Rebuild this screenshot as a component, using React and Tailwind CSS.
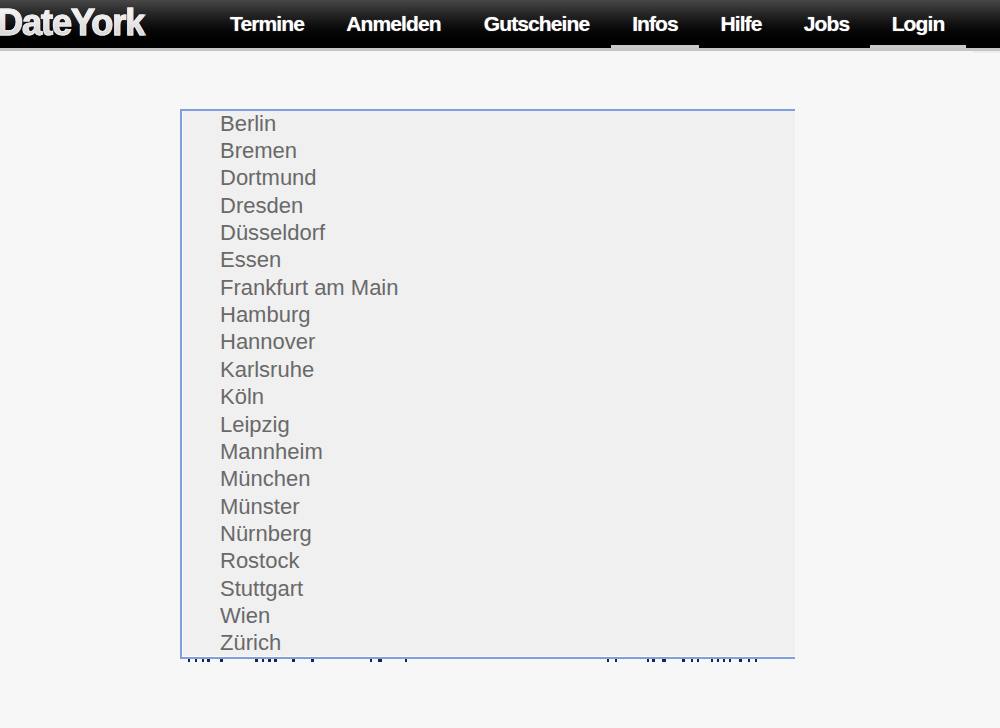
const navItems = [
  { label: 'Termine', width: 'w-[116px]' },
  { label: 'Anmelden', width: 'w-[137px]' },
  { label: 'Gutscheine', width: 'w-[149px]' },
  { label: 'Infos', width: 'w-[88px]', active: true },
  { label: 'Hilfe', width: 'w-[84px]' },
  { label: 'Jobs', width: 'w-[87px]' },
  { label: 'Login', width: 'w-[96px]', active: true },
];

const cities = [
  'Berlin', 'Bremen', 'Dortmund', 'Dresden', 'Düsseldorf', 'Essen', 'Frankfurt am Main',
  'Hamburg', 'Hannover', 'Karlsruhe', 'Köln', 'Leipzig', 'Mannheim', 'München', 'Münster',
  'Nürnberg', 'Rostock', 'Stuttgart', 'Wien', 'Zürich',
];

// tips of the unreadable line cut off under the list: [x, width] from the box's left edge
const cutOffMarks = [
  [8, 2], [15, 2], [22, 2], [27, 3], [40, 3], [75, 3], [82, 2], [88, 3], [94, 3], [112, 3],
  [131, 3], [190, 2], [198, 4], [225, 2], [427, 2], [435, 2], [467, 2], [472, 3], [482, 4],
  [502, 3], [511, 2], [517, 2], [531, 2], [537, 2], [543, 2], [549, 2], [559, 3], [568, 2], [575, 2],
];

const App = () => {
  return (
    <div className="relative h-[728px] overflow-hidden bg-[#f7f7f7] font-['Liberation_Sans',Arial,sans-serif]">
      <header className="flex h-[51px] border-b-[3px] border-[#c4c4c4] bg-gradient-to-b from-[#474747] via-[#111111] via-50% to-black">
        <div className="ml-[-3px] h-[48px] w-[175px] pt-[4px]">
          <span className="bg-gradient-to-b from-white to-[#cccccc] bg-clip-text text-[36px] leading-[38px] font-bold tracking-[-1px] text-transparent [-webkit-text-stroke:1px_#ececec]">
            DateYork
          </span>
        </div>
        <nav className="ml-[37px] flex">
          {navItems.map((item) => (
            <a
              key={item.label}
              className={`flex h-[48px] items-start justify-center pt-[11px] text-[21px] leading-[25px] font-bold tracking-[-0.9px] text-white [text-shadow:0_0_1px_rgba(255,255,255,0.6)] ${item.width} ${item.active ? 'border-b-[3px] border-[#c9c9c9]' : ''}`}
            >
              {item.label}
            </a>
          ))}
        </nav>
      </header>
      <div className="absolute top-[51px] right-0 h-[2px] w-[27px] bg-[#ededed]" />

      <main className="ml-[180px] mt-[58px] w-[615px]">
        <ul className="h-[550px] overflow-hidden border-t-2 border-b-2 border-l-2 border-[#7f9fdd] bg-[#f0f0f0] pl-[38px] text-[22px] text-[#696969] shadow-[inset_1px_-1px_0_#fafafa]">
          {cities.map((city) => (
            <li key={city} className="h-[27.37px] leading-[26.2px] first:mt-[-0.4px]">
              {city}
            </li>
          ))}
        </ul>
        <svg width="615" height="3" className="block">
          {cutOffMarks.map(([x, w]) => (
            <rect key={x} x={x} y="0" width={w} height="3" fill="#1a2250" />
          ))}
        </svg>
      </main>
    </div>
  );
};

export default App;
